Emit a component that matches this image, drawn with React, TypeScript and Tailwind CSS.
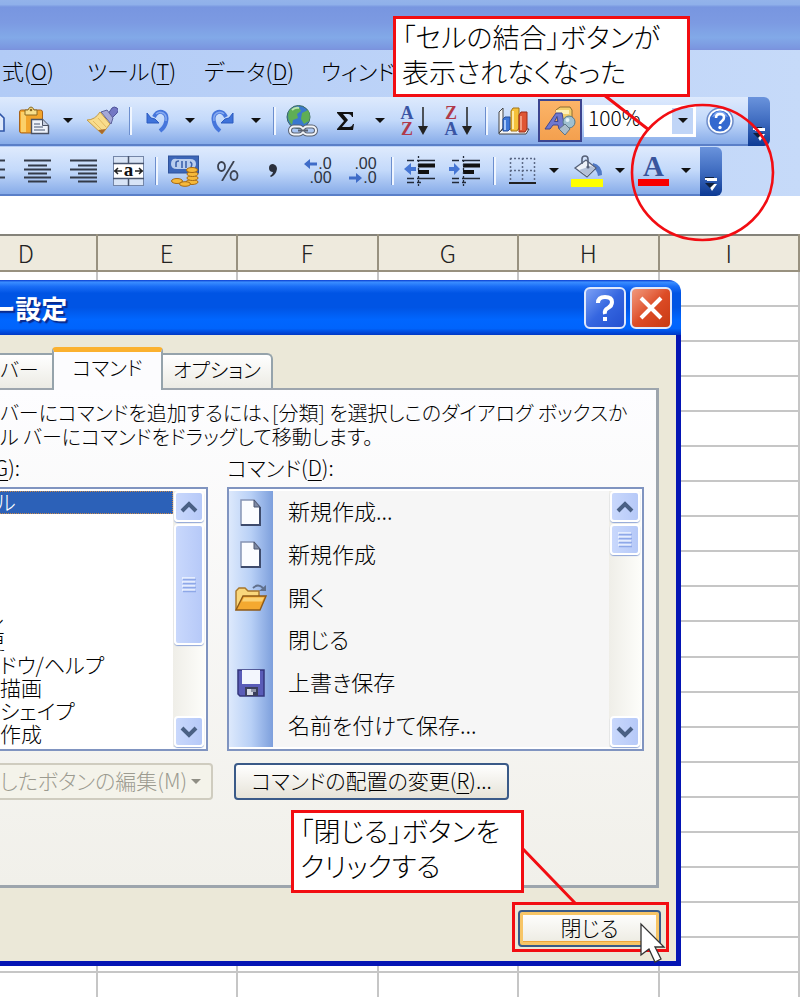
import React from "react";
import { clsx } from "clsx";

/* ---------- toolbar icons ---------- */

function DropArrow() {
  return (
    <svg width="10" height="5" viewBox="0 0 10 5">
      <path d="M0 0h10L5 5z" fill="#111" />
    </svg>
  );
}

function CopyIcon() {
  return (
    <svg width="5" height="28" viewBox="0 0 5 28">
      <path d="M-4 7h4l4 4v13h-8z" fill="#dfe9fb" stroke="#2f55a8" strokeWidth="1.6" />
    </svg>
  );
}

function PasteIcon() {
  return (
    <svg width="32" height="30" viewBox="0 0 32 30">
      <rect x="1.500" y="4" width="23" height="23" rx="2" fill="#f2a52c" stroke="#a8631a" />
      <path d="M3 6h5v20H3z" fill="#fbd06a" />
      <path d="M7 4h3q1-3 3-3t3 3h3v5H7z" fill="#f7df8c" stroke="#8a6a22" />
      <circle cx="13" cy="4" r="1.300" fill="#8a6a22" />
      <path d="M13.500 13.500h11l6 6v8h-17z" fill="#eef3fb" stroke="#4a5264" strokeWidth="1.4" />
      <path d="M24.500 13.500v6h6" fill="#c5cfe2" stroke="#4a5264" />
      <path d="M16 18h6M16 21h9M16 24h11" stroke="#7f8aa0" strokeWidth="1.300" />
    </svg>
  );
}

function BrushIcon() {
  return (
    <svg width="32" height="30" viewBox="0 0 32 30">
      <path d="M22 8l4-6q2-2 5 0t0 5l-6 6z" fill="#7377c4" stroke="#4e5299" />
      <path d="M15 6l6-2 6 8-2 6z" fill="#a5a8d8" stroke="#5c609c" />
      <path d="M14 6l10 12-8 10L1 14q8 0 13-8z" fill="#f8dc8c" stroke="#c39a48" />
      <path d="M7 15l9 9M12 12l8 9" stroke="#e3bb62" />
      <path d="M12 24l4 4 4-5z" fill="#a96a2c" />
    </svg>
  );
}

function UndoIcon({ flip = false }: { flip?: boolean }) {
  return (
    <svg width="24" height="26" viewBox="0 0 24 26" className={clsx(flip && "-scale-x-100")}>
      <path d="M8 9Q11 3 16 4q6 2 4 10-1 5-6 9" fill="none" stroke="#4676dc" strokeWidth="4" />
      <path d="M10 6Q13 3 17 5q4 2 3 8" fill="none" stroke="#86aaf0" strokeWidth="1.500" />
      <path d="M1 5v10h12l-4-4-4-1z" fill="#3f73da" stroke="#2d5cc0" />
    </svg>
  );
}

function GlobeIcon() {
  return (
    <svg width="32" height="32" viewBox="0 0 32 32">
      <circle cx="12.500" cy="12" r="11.500" fill="#3a78cf" stroke="#3c6a5c" />
      <path d="M3 6q5-5 10-4l2 4-4 3 1 4-5 2-1 5q-6-6-3-14zM16 8l6-3q3 5 1 11l-5 3-3-5z" fill="#5fae55" />
      <path d="M6 5q3-3 7-2" stroke="#b9e3b0" strokeWidth="2" fill="none" />
      <rect x="4" y="21.500" width="13" height="8" rx="4" fill="none" stroke="#5b6270" strokeWidth="4" />
      <rect x="17" y="21.500" width="13" height="8" rx="4" fill="none" stroke="#5b6270" strokeWidth="4" />
      <rect x="4" y="21.500" width="13" height="8" rx="4" fill="none" stroke="#f2f5fa" strokeWidth="2" />
      <rect x="17" y="21.500" width="13" height="8" rx="4" fill="none" stroke="#f2f5fa" strokeWidth="2" />
      <path d="M12 25.500h10" stroke="#5b6270" strokeWidth="2" />
    </svg>
  );
}

function SigmaIcon() {
  return (
    <svg width="18" height="18" viewBox="0 0 18 18">
      <path d="M0 0h16v5h-1q-1-3-4-3H6l5 6-6 7h7q3 0 4-3h1l-1 6H0v-1l7-8-7-8z" fill="#111" />
    </svg>
  );
}

function SortIcon({ top, bottom }: { top: string; bottom: string }) {
  const color = (c: string) => (c === "A" ? "text-[#3a55a4]" : "text-[#b03a4a]");
  return (
    <span className="flex items-center gap-1 font-['Liberation_Serif',serif] text-lg leading-4 font-bold">
      <span className="flex flex-col items-center">
        <span className={color(top)}>{top}</span>
        <span className={color(bottom)}>{bottom}</span>
      </span>
      <svg width="10" height="30" viewBox="0 0 10 30">
        <path d="M5 1v22" stroke="#222" strokeWidth="1.500" />
        <path d="M0 20h10L5 29z" fill="#222" />
      </svg>
    </span>
  );
}

function ChartIcon() {
  return (
    <svg width="32" height="30" viewBox="0 0 32 30">
      <path d="M1 6l4-4v20l-4 5zM1 27l4-4h26l-3 5H1z" fill="#f4f4f4" stroke="#454545" />
      <path d="M5 13l2-2h5v12l-2 2H5z" fill="#3f78d8" stroke="#244f9c" />
      <path d="M13 5l2-3h6v20l-2 3h-6z" fill="#f5c13a" stroke="#a37516" />
      <path d="M15 5v18" stroke="#fdeaa4" strokeWidth="2" />
      <path d="M21 9l2-3h6v17l-2 3h-6z" fill="#df5634" stroke="#9a2d18" />
      <path d="M7 14v10" stroke="#a7c8fa" strokeWidth="2" />
      <path d="M23 10v14" stroke="#f39a7c" strokeWidth="2" />
    </svg>
  );
}

function DrawingIcon() {
  return (
    <svg width="32" height="30" viewBox="0 0 32 30">
      <path d="M12 4l4-3h10l2 3v14H14z" fill="#f4cf6c" stroke="#8c6a30" />
      <path d="M12 4h13v4H12z" fill="#fdf0b8" />
      <path d="M1 23L12 7h6l3 16h-6l-1-4H9l-3 4zM10.500 15.500h3.500l-1-5z" fill="#6f78cf" stroke="#40478f" fillRule="evenodd" />
      <circle cx="25" cy="16" r="6" fill="#9fc0d0" stroke="#55798b" />
      <circle cx="23.500" cy="14" r="2" fill="#e4f1f6" />
      <path d="M15 23l6-5 5 5-5 6z" fill="#a9bccc" stroke="#5d7486" />
    </svg>
  );
}

function HelpIcon() {
  return (
    <svg width="28" height="28" viewBox="0 0 28 28">
      <circle cx="14" cy="14" r="13" fill="#fff" stroke="#6d8cc9" strokeWidth="1.500" />
      <circle cx="14" cy="14" r="10.500" fill="#3469cf" />
      <path d="M6 10q3-6 8-6t8 6q-8-3-16 0z" fill="#7ea6ee" />
      <path d="M10 11q0-4 4-4t4 3.500q0 2-2 3.500t-2 3" fill="none" stroke="#fff" strokeWidth="2.600" />
      <circle cx="14" cy="20.500" r="1.700" fill="#fff" />
    </svg>
  );
}

function AlignIcon({ kind }: { kind: "left" | "center" | "right" }) {
  const d = {
    left: "M-22 1.500H5M-22 6.500H0M-22 10.500H5M-22 14.500H0M-22 18.500H5M-22 22.500H0",
    center: "M0 1.500h27M4 6.500h19M0 10.500h27M4 14.500h19M0 18.500h27M4 22.500h19",
    right: "M0 1.500h27M8 6.500h19M0 10.500h27M8 14.500h19M0 18.500h27M8 22.500h19",
  }[kind];
  const width = kind === "left" ? 6 : 27;
  return (
    <svg width={width} height="24" viewBox={`0 0 ${width} 24`}>
      <path d={d} stroke="#333a48" strokeWidth="1.800" />
    </svg>
  );
}

function MergeIcon() {
  return (
    <svg width="31" height="30" viewBox="0 0 31 30">
      <rect x="0.500" y="0.500" width="30" height="29" fill="#fff" stroke="#7486a8" />
      <path d="M1 1h29v6H1zM1 23h29v6H1z" fill="#d8e4f6" />
      <path d="M0 7.500h31M0 22.500h31M15.500 0v7M15.500 23v7" stroke="#48556e" strokeWidth="1.500" />
      <path d="M1 15h8M22 15h8M5 12l-3 3 3 3M26 12l3 3-3 3" stroke="#222" strokeWidth="1.500" fill="none" />
      <text x="15.500" y="20" textAnchor="middle" fontSize="19" fontWeight="700" fontFamily="Liberation Serif, serif" fill="#111">
        a
      </text>
    </svg>
  );
}

function CurrencyIcon() {
  return (
    <svg width="32" height="32" viewBox="0 0 32 32">
      <rect x="0.500" y="1" width="30" height="17" fill="#3c66b8" stroke="#2f539c" />
      <path d="M3 9q0-6 6-5h13q6 0 6 5t-6 5H9q-6 0-6-5z" fill="#b9cdee" />
      <path d="M8 12V8q0-2 3-2M14 6v7M18 6v7M22 7q3 1 1 5" stroke="#3f63ac" strokeWidth="1.600" fill="none" />
      <g fill="#f6b93a" stroke="#a76a14">
        <ellipse cx="24" cy="27" rx="6" ry="2.500" />
        <ellipse cx="24.500" cy="23" rx="5.500" ry="2.500" />
        <ellipse cx="24.500" cy="19" rx="5.500" ry="2.500" />
        <ellipse cx="24" cy="15" rx="5.500" ry="2.500" />
        <ellipse cx="9" cy="26" rx="5.500" ry="2.500" />
        <ellipse cx="17" cy="29" rx="5.500" ry="2.300" />
      </g>
    </svg>
  );
}

function PercentIcon() {
  return (
    <svg width="22" height="20" viewBox="0 0 22 20">
      <g fill="none" stroke="#3c4250" strokeWidth="1.800">
        <ellipse cx="4.500" cy="5.500" rx="3.500" ry="4.500" />
        <ellipse cx="17" cy="14.500" rx="3.500" ry="4.500" />
        <path d="M17 0L5 20" />
      </g>
    </svg>
  );
}

function CommaIcon() {
  return (
    <svg width="10" height="14" viewBox="0 0 10 14">
      <path d="M1 4q0-4 4-4 4 1 4 5-1 6-6 8l-1-1q3-2 3-4-4 0-4-4z" fill="#2b303c" />
    </svg>
  );
}

function DecimalIcon({ top, bottom, back = false }: { top: string; bottom: string; back?: boolean }) {
  const arrow = (
    <svg width="13" height="10" viewBox="0 0 13 10" className={clsx(back && "-scale-x-100")}>
      <path d="M0 5l6-5v3.500h7v3H6V10z" fill="#3f6cc8" />
    </svg>
  );
  return (
    <span className="flex flex-col items-end font-['Liberation_Sans',sans-serif] text-base leading-[14px] text-[#2c3340]">
      <span className="flex items-center gap-px">
        {!back && arrow}
        {top}
      </span>
      <span className="flex items-center gap-px">
        {back && arrow}
        {bottom}
      </span>
    </span>
  );
}

function IndentIcon({ back = false }: { back?: boolean }) {
  return (
    <svg width="32" height="30" viewBox="0 0 32 30">
      <path d="M3 4.500h7M3 22.500h7M3 26.500h7M13 4.500h18M13 22.500h18M13 26.500h4" stroke="#222a38" strokeWidth="1.600" />
      <path d="M14 9.500h17M14 16h11" stroke="#111" strokeWidth="4" />
      <path d="M14.500 0v30" stroke="#222a38" strokeWidth="1.300" strokeDasharray="2 2" />
      <path d={back ? "M0 13l7-6v4h5v4H7v4z" : "M11 13L5 7v4H0v4h5v4z"} fill="#4676d4" />
    </svg>
  );
}

function BorderIcon() {
  return (
    <svg width="27" height="28" viewBox="0 0 27 28">
      <path d="M1 1.500h25M1 13.500h25M1.500 1v25M13.500 1v25M25.500 1v25" stroke="#5c6a86" strokeWidth="1.500" strokeDasharray="2 2" />
      <path d="M0 26h27" stroke="#222" strokeWidth="2" />
    </svg>
  );
}

function FillIcon() {
  return (
    <svg width="32" height="32" viewBox="0 0 32 32">
      <path d="M22 8q9 2 9 12l-4 1q-1-7-6-8z" fill="#4f79c6" />
      <path d="M4 13L15 5l10 8-9 9z" fill="#eef2f8" stroke="#566178" strokeWidth="1.300" />
      <path d="M8 15l8 6 8-8-4-2z" fill="#b4c1d8" />
      <path d="M11 9V4q0-3 3-3t3 3v8" fill="none" stroke="#566178" strokeWidth="1.600" />
      <circle cx="17" cy="12" r="1.600" fill="#566178" />
      <path d="M0 24h32v8H0z" fill="#ff0" />
    </svg>
  );
}

function FontColorIcon() {
  return (
    <svg width="31" height="32" viewBox="0 0 31 32" className="overflow-visible">
      <text x="15.500" y="21" textAnchor="middle" fontSize="29" fontWeight="700" fontFamily="Liberation Serif, serif" fill="#39559c">
        A
      </text>
      <path d="M0 24h31v7H0z" fill="#f80000" />
    </svg>
  );
}

/* ---------- toolbar pieces ---------- */

function ToolButton({ label, className, children }: { label: string; className?: string; children?: React.ReactNode }) {
  return (
    <button type="button" aria-label={label} className={clsx("flex h-full shrink-0 items-center justify-center", className)}>
      {children ?? <DropArrow />}
    </button>
  );
}

function Separator() {
  return (
    <div className="flex w-3 shrink-0 justify-center">
      <div className="h-7 w-px bg-[#6c8fcf]" />
      <div className="h-7 w-0.5 bg-[#eff5fe]" />
    </div>
  );
}

function Toolbar({ children }: { children: React.ReactNode }) {
  return (
    <div className="flex h-[49px] w-max">
      <div className="flex items-center border-b-2 border-[#5a7fc8] bg-linear-to-b from-[#deeafd] via-[#c3d9fa] to-[#87abe8] pr-1">
        {children}
      </div>
      <button
        type="button"
        aria-label="ツール バー オプション"
        className="flex w-[22px] items-end justify-center rounded-r-md bg-linear-to-b from-[#6a93dc] via-[#3f6cc0] to-[#0c3a94] pb-1"
      >
        <svg width="12" height="15" viewBox="0 0 12 15">
          <path d="M2 1h10v3H2zM3 7h9l-5 7z" fill="#fff" />
          <path d="M0 0h9v2H0zM0 6h10l-5 5z" fill="#10203c" />
          <path d="M0 1h10v2H0z" fill="#fff" />
        </svg>
      </button>
    </div>
  );
}

function Key({ children }: { children: string }) {
  return (
    <>
      (<span className="underline decoration-1 underline-offset-4">{children}</span>)
    </>
  );
}

const menus = [
  { name: "式", key: "O", width: "w-[85px]" },
  { name: "ツール", key: "T", width: "w-[117px]" },
  { name: "データ", key: "D", width: "w-[117px]" },
  { name: "ウィンドウ", key: "", width: "w-[117px]" },
];

/* ---------- sheet ---------- */

const columns = ["D", "E", "F", "G", "H", "I"];
const rows = Array.from({ length: 21 }, (_, i) => i);

function Sheet() {
  return (
    <div className="min-h-0 flex-1 overflow-hidden">
      <table className="-ml-11 h-[774px] w-[calc(100%+44px)] table-fixed border-collapse border-t-2 border-[#85837a]">
        <thead>
          <tr className="h-9 bg-[#eeeadd]">
            {columns.map((c) => (
              <th key={c} className="border-r-2 border-b-2 border-[#98917f] p-0 text-2xl leading-8 font-light text-[#222]">
                {c}
              </th>
            ))}
          </tr>
        </thead>
        <tbody>
          {rows.map((r) => (
            <tr key={r}>
              {columns.map((c) => (
                <td key={c} className="border-r-2 border-b-2 border-[#c6c6c6] p-0" />
              ))}
            </tr>
          ))}
        </tbody>
      </table>
    </div>
  );
}

/* ---------- dialog ---------- */

function Chevron({ down = false }: { down?: boolean }) {
  return (
    <svg width="18" height="12" viewBox="0 0 18 12" className={clsx(down && "rotate-180")}>
      <path d="M2 10l7-7 7 7" fill="none" stroke="#4a6084" strokeWidth="4" />
    </svg>
  );
}

function ScrollBar({ thumb }: { thumb: string }) {
  const part = "flex shrink-0 items-center justify-center rounded border-2 border-white bg-linear-to-r from-[#c9d8fc] to-[#b6c9f8] shadow-[0_1px_1px_#8fa6d8]";
  return (
    <div className="flex w-8 shrink-0 flex-col gap-0.5 bg-linear-to-r from-[#efeee8] to-[#fdfdfa] px-px">
      <button type="button" aria-label="上へ" className={clsx(part, "h-[31px]")}>
        <Chevron />
      </button>
      <div className={clsx(part, thumb)}>
        <svg width="14" height="18" viewBox="0 0 14 18">
          <path d="M0 2h13M0 6h13M0 10h13M0 14h13" stroke="#f1f6ff" strokeWidth="1.500" />
          <path d="M1 3.500h13M1 7.500h13M1 11.500h13M1 15.500h13" stroke="#8ea8e8" strokeWidth="1.500" />
        </svg>
      </div>
      <div className="flex-1" />
      <button type="button" aria-label="下へ" className={clsx(part, "h-[31px]")}>
        <Chevron down />
      </button>
    </div>
  );
}

function PageIcon() {
  return (
    <svg width="22" height="27" viewBox="0 0 22 27">
      <path d="M1 1h13l6 7v18H1z" fill="#fbfcff" stroke="#8794b4" strokeWidth="1.500" />
      <path d="M20 8v18H1" fill="none" stroke="#3e4b6c" strokeWidth="2" />
      <path d="M14 1l6 7h-6z" fill="#7f8aa4" stroke="#4c5670" />
    </svg>
  );
}

function OpenIcon() {
  return (
    <svg width="32" height="28" viewBox="0 0 32 28">
      <path d="M1 26V7l3-3h6l3 3h11v6" fill="#f9d77c" stroke="#a8762a" strokeWidth="1.400" />
      <path d="M1 26l7-14h23l-6 14z" fill="#f4a930" stroke="#8f5a16" strokeWidth="1.400" />
      <path d="M9 13.500h20l-2 4H7z" fill="#fbd376" />
      <path d="M18 4q5-5 10 0" fill="none" stroke="#60708c" strokeWidth="1.800" />
      <path d="M31 1v6h-7z" fill="#60708c" />
    </svg>
  );
}

function SaveIcon() {
  return (
    <svg width="28" height="28" viewBox="0 0 28 28">
      <path d="M1 1h26v26H3l-2-2z" fill="#5a5cb8" stroke="#34367c" strokeWidth="1.500" />
      <path d="M5 1h18v14H5z" fill="#f3f6fd" />
      <path d="M8 18h13v9H8z" fill="#3b3f5c" />
      <path d="M10 20h6v6h-6z" fill="#d9dde8" />
      <path d="M14 20h5v3h-5z" fill="#8f95a8" />
    </svg>
  );
}

const categories = [
  { label: "ル", className: "-ml-1 bg-[#2c61b8] text-white outline outline-dotted outline-[#c8894a] -outline-offset-1" },
  { label: "" },
  { label: "" },
  { label: "" },
  { label: "" },
  { label: "ル", className: "-ml-4" },
  { label: "更", className: "-ml-4" },
  { label: "ドウ/ヘルプ" },
  { label: "描画" },
  { label: "シェイプ" },
  { label: "作成" },
];

const commands = [
  { label: "新規作成...", icon: <PageIcon /> },
  { label: "新規作成", icon: <PageIcon /> },
  { label: "開く", icon: <OpenIcon /> },
  { label: "閉じる" },
  { label: "上書き保存", icon: <SaveIcon /> },
  { label: "名前を付けて保存..." },
];

function CaptionButton({ label, className, children }: { label: string; className: string; children: React.ReactNode }) {
  return (
    <button
      type="button"
      aria-label={label}
      className={clsx("flex size-[42px] items-center justify-center rounded-md border-2 border-[#dfe8fc] bg-linear-to-br", className)}
    >
      <svg width="30" height="30" viewBox="0 0 30 30" fill="none" stroke="#fff" strokeWidth="4">
        {children}
      </svg>
    </button>
  );
}

function CustomizeDialog() {
  return (
    <section aria-label="ユーザー設定" className="absolute top-[280px] left-0 w-[681px] overflow-hidden rounded-tr-xl text-[21px] leading-6">
      <header className="flex h-[55px] items-center gap-1 bg-[linear-gradient(to_bottom,#0a3cd0_0,#3a8dff_4%,#1a6df6_12%,#0054e4_24%,#0054e4_50%,#0066ff_72%,#0064fc_88%,#0038c4_100%)] pr-[9px]">
        <h2 className="-ml-2.5 flex-1 text-[26px] font-bold whitespace-nowrap text-white [text-shadow:2px_2px_1px_#0a2a8c]">ー設定</h2>
        <CaptionButton label="ヘルプ" className="from-[#7da0f4] via-[#3566e0] to-[#2350d0]">
          <path d="M8 10q0-6 7-6t7 5q0 4-4 6t-3 6M15 24v4" />
        </CaptionButton>
        <CaptionButton label="閉じる" className="from-[#f0997c] via-[#dd4c26] to-[#c83a12]">
          <path d="M5 5l20 20M25 5L5 25" />
        </CaptionButton>
      </header>

      <div className="border-r-5 border-b-5 border-[#0515b4] bg-[#ebe8d8] pt-3 pb-[14px]">
        <div role="tablist" className="relative -mb-0.5 flex items-end text-xl leading-6">
          <button type="button" role="tab" aria-selected="false" className="mb-0.5 h-[35px] w-[52px] border-t-2 border-[#95a3ab] bg-linear-to-b from-white to-[#ecebe4] pb-1 text-left whitespace-nowrap">
            バー
          </button>
          <button type="button" role="tab" aria-selected="true" className="h-[43px] w-[111px] rounded-t border-x-2 border-t-5 border-x-[#95a3ab] border-t-[#fbb12f] bg-[#fcfcfe] pb-1.5">
            コマンド
          </button>
          <button type="button" role="tab" aria-selected="false" className="mb-0.5 h-[35px] w-[110px] rounded-tr-md border-t-2 border-r-2 border-[#95a3ab] bg-linear-to-b from-white to-[#ecebe4] pb-1">
            オプション
          </button>
        </div>

        <div className="mr-[17px] border-t-2 border-r-3 border-b-3 border-[#9da5ad] bg-linear-to-b from-[#fdfdff] to-[#f1f0ea] pt-[11px] pr-3 pb-[85px]">
          <p className="text-xl leading-6 whitespace-nowrap">
            バーにコマンドを追加するには、[分類] を選択しこのダイアログ ボックスか
            <br />
            ル バーにコマンドをドラッグして移動します。
          </p>

          <div className="mt-1.5 grid grid-cols-[208px_1fr] gap-x-[19px]">
            <div id="category-label" className="pb-2">
              <span className="-ml-1.5">
                <span className="underline decoration-1 underline-offset-4">G</span>):
              </span>
            </div>
            <div id="command-label" className="pb-2">
              コマンド
              <Key>D</Key>:
            </div>

            <div className="flex h-[264px] border-y-2 border-r-2 border-[#8094c0] bg-white py-0.5 pr-px">
              <ul role="listbox" aria-labelledby="category-label" className="grid flex-1 auto-rows-fr">
                {categories.map((c, i) => (
                  <li key={i} role="option" aria-selected={i === 0} className={clsx("flex min-h-0 items-center pb-1 leading-5 whitespace-nowrap", c.className)}>
                    {c.label}
                  </li>
                ))}
              </ul>
              <ScrollBar thumb="h-[121px]" />
            </div>

            <div className="flex h-[264px] border-2 border-[#8094c0] bg-white py-0.5 pr-px">
              <ul role="listbox" aria-labelledby="command-label" className="grid flex-1 auto-rows-fr bg-[#f6f6f6] text-[22px]">
                {commands.map((c, i) => (
                  <li key={i} role="option" aria-selected="false" className="flex items-stretch">
                    <span className="flex w-11 items-center justify-center bg-linear-to-r from-[#dde9fc] via-[#b8d0f6] to-[#7d9fdc]">{c.icon}</span>
                    <span className="flex items-center pb-1 pl-[15px] whitespace-nowrap">{c.label}</span>
                  </li>
                ))}
              </ul>
              <ScrollBar thumb="h-[31px]" />
            </div>

            <div className="mt-3">
              <button type="button" disabled className="flex h-[37px] w-[213px] items-center justify-between rounded-r border-y-2 border-r-2 border-[#cfccbf] bg-[#f4f3ea] pr-2.5 whitespace-nowrap text-[#9c9b90]">
                <span className="pb-1">したボタンの編集(M)</span>
                <svg width="10" height="5" viewBox="0 0 10 5">
                  <path d="M0 0h10L5 5z" fill="#8f8e84" />
                </svg>
              </button>
            </div>
            <div className="mt-3 pl-[7px]">
              <button type="button" className="h-[37px] w-[275px] rounded border-2 border-[#3a5a88] bg-linear-to-b from-white to-[#e6e3d8] pb-1 whitespace-nowrap">
                コマンドの配置の変更
                <Key>R</Key>...
              </button>
            </div>
          </div>
        </div>

        <div className="mt-[22px] mr-[15px] flex justify-end">
          <button
            type="button"
            className="h-[37px] w-[143px] rounded border-2 border-[#3a5a88] bg-linear-to-b from-white to-[#eceae0] pb-1 shadow-[inset_0_0_0_3px_#f7c566,inset_0_-4px_0_#f0a63a]"
          >
            閉じる
          </button>
        </div>
      </div>
    </section>
  );
}

/* ---------- page ---------- */

export default function App() {
  return (
    <main className="relative flex h-screen flex-col overflow-hidden bg-white font-['Noto_Sans_CJK_JP',sans-serif] font-light text-black [font-feature-settings:'palt']">
      <div className="h-[50px] shrink-0 bg-[linear-gradient(to_bottom,#93b3ea_0,#8fb0ea_9%,#7896e0_14%,#7c9ae2_45%,#82a9e8_75%,#7b97e0_96%,#7b90dc_100%)]" />
      <div className="shrink-0 bg-linear-to-r from-[#b2cbf6] to-[#c6daf9]">
        <nav className="flex h-[47px] items-center pl-0.5 text-[22px] leading-8">
          {menus.map((m) => (
            <button key={m.name} type="button" className={clsx("shrink-0 pb-2 text-left whitespace-nowrap", m.width)}>
              {m.name}
              {m.key && <Key>{m.key}</Key>}
            </button>
          ))}
        </nav>

        <div className="flex flex-col gap-px">
          <Toolbar>
            <ToolButton label="コピー" className="w-3 justify-start!"><CopyIcon /></ToolButton>
            <ToolButton label="貼り付け" className="w-11"><PasteIcon /></ToolButton>
            <ToolButton label="貼り付けオプション" className="w-6" />
            <ToolButton label="書式のコピー" className="w-11"><BrushIcon /></ToolButton>
            <Separator />
            <ToolButton label="元に戻す" className="w-11"><UndoIcon /></ToolButton>
            <ToolButton label="元に戻す履歴" className="w-5" />
            <ToolButton label="やり直し" className="w-11"><UndoIcon flip /></ToolButton>
            <ToolButton label="やり直し履歴" className="w-6" />
            <Separator />
            <ToolButton label="ハイパーリンク" className="w-11"><GlobeIcon /></ToolButton>
            <ToolButton label="オート SUM" className="w-11"><SigmaIcon /></ToolButton>
            <ToolButton label="関数" className="w-6" />
            <ToolButton label="昇順" className="w-11"><SortIcon top="A" bottom="Z" /></ToolButton>
            <ToolButton label="降順" className="w-11"><SortIcon top="Z" bottom="A" /></ToolButton>
            <Separator />
            <ToolButton label="グラフ" className="w-11"><ChartIcon /></ToolButton>
            <button type="button" aria-label="図形描画" aria-pressed="true" className="mx-0.5 flex h-[43px] w-11 items-center justify-center border-2 border-[#3c4590] bg-linear-to-b from-[#fcb468] to-[#f3a04e]">
              <DrawingIcon />
            </button>
            <div className="flex h-8 w-28 items-center bg-white pr-[3px]">
              <select aria-label="ズーム" className="min-w-0 flex-1 appearance-none pb-2 pl-1 text-[21px] leading-6">
                <option>100%</option>
              </select>
              <span className="flex h-[26px] w-[21px] items-center justify-center bg-[#c0d5f7]">
                <DropArrow />
              </span>
            </div>
            <ToolButton label="ヘルプ" className="w-12"><HelpIcon /></ToolButton>
          </Toolbar>

          <Toolbar>
            <ToolButton label="左揃え" className="w-[14px] justify-start!"><AlignIcon kind="left" /></ToolButton>
            <ToolButton label="中央揃え" className="w-[46px]"><AlignIcon kind="center" /></ToolButton>
            <ToolButton label="右揃え" className="w-[46px]"><AlignIcon kind="right" /></ToolButton>
            <ToolButton label="セルを結合して中央揃え" className="w-11"><MergeIcon /></ToolButton>
            <Separator />
            <ToolButton label="通貨スタイル" className="w-11"><CurrencyIcon /></ToolButton>
            <ToolButton label="パーセント" className="w-11"><PercentIcon /></ToolButton>
            <ToolButton label="桁区切り" className="w-[46px]"><CommaIcon /></ToolButton>
            <ToolButton label="小数点表示桁上げ" className="w-11"><DecimalIcon top=".0" bottom=".00" /></ToolButton>
            <ToolButton label="小数点表示桁下げ" className="w-[46px]"><DecimalIcon top=".00" bottom=".0" back /></ToolButton>
            <Separator />
            <ToolButton label="インデント解除" className="w-11"><IndentIcon back /></ToolButton>
            <ToolButton label="インデント" className="w-[46px]"><IndentIcon /></ToolButton>
            <Separator />
            <ToolButton label="罫線" className="w-11"><BorderIcon /></ToolButton>
            <ToolButton label="罫線の種類" className="w-5" />
            <ToolButton label="塗りつぶしの色" className="w-[46px]"><FillIcon /></ToolButton>
            <ToolButton label="塗りつぶしの色の一覧" className="w-5" />
            <ToolButton label="フォントの色" className="w-[46px]"><FontColorIcon /></ToolButton>
            <ToolButton label="フォントの色の一覧" className="w-5" />
          </Toolbar>
        </div>
      </div>

      <div className="h-[38px] shrink-0 bg-white" />
      <Sheet />
      <CustomizeDialog />

      {/* annotations */}
      <p className="absolute top-4 left-[393px] h-[81px] w-[297px] border-3 border-[#f20d12] bg-white pl-1.5 text-[27px] leading-[35px] whitespace-nowrap">
        「セルの結合」ボタンが
        <br />
        表示されなくなった
      </p>
      <p className="absolute top-[810px] left-[291px] h-[83px] w-[233px] border-3 border-[#f20d12] bg-white pl-1.5 text-[27px] leading-[35px] whitespace-nowrap">
        「閉じる」ボタンを
        <br />
        クリックする
      </p>
      <div className="absolute top-[902px] left-[512px] h-[50px] w-[157px] border-3 border-[#f20d12]" />
      <svg className="pointer-events-none absolute top-0 left-0" width="800" height="997" viewBox="0 0 800 997">
        <g fill="none" stroke="#f20d12" strokeWidth="2.600">
          <ellipse cx="702.500" cy="172.500" rx="70.500" ry="67.500" />
          <path d="M604 95l45 35M523 849l52 54" strokeWidth="3" />
        </g>
        <path d="M641 924v31l8-6 6 13 6-3-6-12h9z" fill="#fff" stroke="#333" strokeWidth="1.300" />
      </svg>
    </main>
  );
}
